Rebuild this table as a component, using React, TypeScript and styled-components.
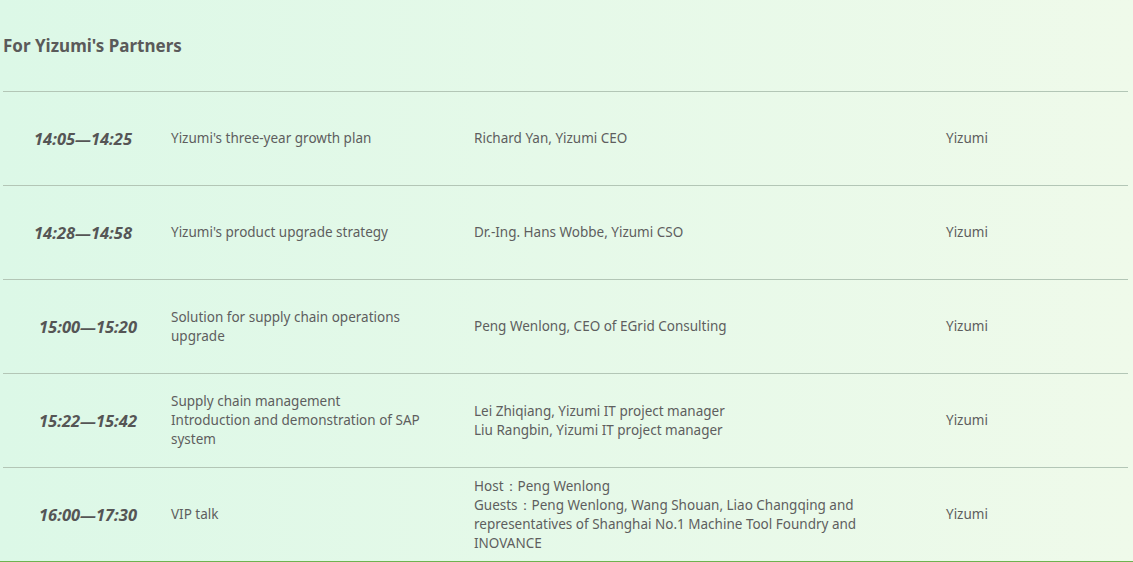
import styled, { createGlobalStyle } from "styled-components";

interface Session {
    time: string;
    topic: string[];
    speaker: string[];
    org: string;
    shift?: boolean;
}

const sessions: Session[] = [
    {
        time: "14:05—14:25",
        topic: ["Yizumi's three-year growth plan"],
        speaker: ["Richard Yan, Yizumi CEO"],
        org: "Yizumi",
    },
    {
        time: "14:28—14:58",
        topic: ["Yizumi's product upgrade strategy"],
        speaker: ["Dr.-Ing. Hans Wobbe, Yizumi CSO"],
        org: "Yizumi",
    },
    {
        time: "15:00—15:20",
        topic: ["Solution for supply chain operations", "upgrade"],
        speaker: ["Peng Wenlong, CEO of EGrid Consulting"],
        org: "Yizumi",
        shift: true,
    },
    {
        time: "15:22—15:42",
        topic: ["Supply chain management", "Introduction and demonstration of SAP", "system"],
        speaker: ["Lei Zhiqiang, Yizumi IT project manager", "Liu Rangbin, Yizumi IT project manager"],
        org: "Yizumi",
        shift: true,
    },
    {
        time: "16:00—17:30",
        topic: ["VIP talk"],
        speaker: [
            "Host：Peng Wenlong",
            "Guests：Peng Wenlong, Wang Shouan, Liao Changqing and",
            "representatives of Shanghai No.1 Machine Tool Foundry and",
            "INOVANCE",
        ],
        org: "Yizumi",
        shift: true,
    },
];

const App = () => {
    return (
        <>
            <GlobalStyle />
            <Page>
                <Heading>For Yizumi's Partners</Heading>
                <Table>
                    {sessions.map((s) => (
                        <Row key={s.time}>
                            <Time $shift={s.shift}>{s.time}</Time>
                            <Cell>
                                {s.topic.map((l) => (
                                    <Line key={l}>{l}</Line>
                                ))}
                            </Cell>
                            <Cell>
                                {s.speaker.map((l) => (
                                    <Line key={l}>{l}</Line>
                                ))}
                            </Cell>
                            <Cell>{s.org}</Cell>
                        </Row>
                    ))}
                </Table>
            </Page>
        </>
    );
};

export default App;

const GlobalStyle = createGlobalStyle`
    html, body {
        margin: 0;
        padding: 0;
    }
    body {
        font-family: "Noto Sans", "Liberation Sans", sans-serif;
        color: #5e5e5e;
    }
`;

const Page = styled.div`
    width: 1133px;
    height: 562px;
    box-sizing: border-box;
    background: linear-gradient(to right, #dcf8e7, #effaea);
    border-bottom: 1px solid #6fb24f;
    overflow: hidden;
`;

const Heading = styled.h2`
    height: 91px;
    margin: 0;
    padding-left: 3px;
    display: flex;
    align-items: center;
    font-size: 17px;
    font-weight: 700;
    color: #5a5a5a;
`;

const Table = styled.div`
    width: 1125px;
    margin-left: 3px;
    border-bottom: 1px solid #b3c6b6;
`;

const Row = styled.div`
    display: grid;
    grid-template-columns: 160px 303px 472px 1fr;
    align-items: center;
    height: 94px;
    box-sizing: border-box;
    border-top: 1px solid #b3c6b6;
`;

const Time = styled.div<{ $shift?: boolean }>`
    text-align: center;
    padding-left: ${(p) => (p.$shift ? "10px" : "0")};
    font-size: 16.5px;
    font-weight: 700;
    font-style: italic;
    color: #555;
`;

const Cell = styled.div`
    padding-left: 8px;
    font-size: 13.5px;
    line-height: 19px;
`;

const Line = styled.div`
    white-space: nowrap;
`;
